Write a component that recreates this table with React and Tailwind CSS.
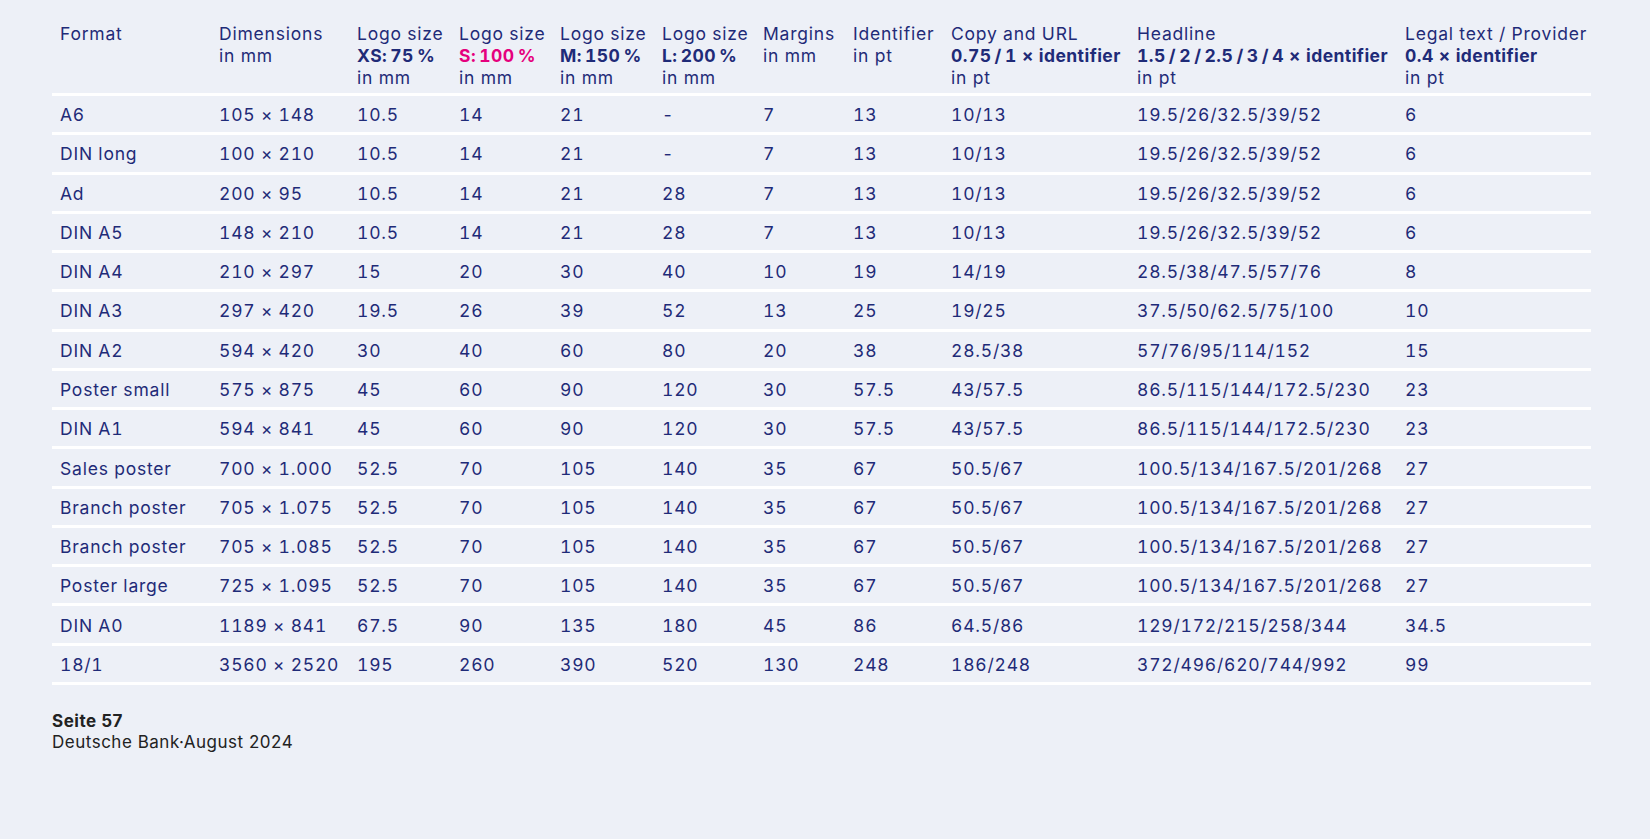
import React from "react";

const cols = [
  "w-[159px]",
  "w-[138px]",
  "w-[102px]",
  "w-[101px]",
  "w-[102px]",
  "w-[101px]",
  "w-[90px]",
  "w-[98px]",
  "w-[186px]",
  "w-[268px]",
  "w-[194px]",
];

const t = "\u2009";

const header = [
  { top: "Format" },
  { top: "Dimensions", bottom: "in mm" },
  { top: "Logo size", mid: `XS:${t}75${t}%`, bottom: "in mm" },
  { top: "Logo size", mid: `S:${t}100${t}%`, bottom: "in mm", pink: true },
  { top: "Logo size", mid: `M:${t}150${t}%`, bottom: "in mm" },
  { top: "Logo size", mid: `L:${t}200${t}%`, bottom: "in mm" },
  { top: "Margins", bottom: "in mm" },
  { top: "Identifier", bottom: "in pt" },
  { top: "Copy and URL", mid: `0.75${t}/${t}1 × identifier`, bottom: "in pt" },
  { top: "Headline", mid: `1.5${t}/${t}2${t}/${t}2.5${t}/${t}3${t}/${t}4 × identifier`, bottom: "in pt" },
  { top: "Legal text / Provider", mid: "0.4 × identifier", bottom: "in pt" },
];

const rows = [
  ["A6", "105 × 148", "10.5", "14", "21", "-", "7", "13", "10/13", "19.5/26/32.5/39/52", "6"],
  ["DIN long", "100 × 210", "10.5", "14", "21", "-", "7", "13", "10/13", "19.5/26/32.5/39/52", "6"],
  ["Ad", "200 × 95", "10.5", "14", "21", "28", "7", "13", "10/13", "19.5/26/32.5/39/52", "6"],
  ["DIN A5", "148 × 210", "10.5", "14", "21", "28", "7", "13", "10/13", "19.5/26/32.5/39/52", "6"],
  ["DIN A4", "210 × 297", "15", "20", "30", "40", "10", "19", "14/19", "28.5/38/47.5/57/76", "8"],
  ["DIN A3", "297 × 420", "19.5", "26", "39", "52", "13", "25", "19/25", "37.5/50/62.5/75/100", "10"],
  ["DIN A2", "594 × 420", "30", "40", "60", "80", "20", "38", "28.5/38", "57/76/95/114/152", "15"],
  ["Poster small", "575 × 875", "45", "60", "90", "120", "30", "57.5", "43/57.5", "86.5/115/144/172.5/230", "23"],
  ["DIN A1", "594 × 841", "45", "60", "90", "120", "30", "57.5", "43/57.5", "86.5/115/144/172.5/230", "23"],
  ["Sales poster", "700 × 1.000", "52.5", "70", "105", "140", "35", "67", "50.5/67", "100.5/134/167.5/201/268", "27"],
  ["Branch poster", "705 × 1.075", "52.5", "70", "105", "140", "35", "67", "50.5/67", "100.5/134/167.5/201/268", "27"],
  ["Branch poster", "705 × 1.085", "52.5", "70", "105", "140", "35", "67", "50.5/67", "100.5/134/167.5/201/268", "27"],
  ["Poster large", "725 × 1.095", "52.5", "70", "105", "140", "35", "67", "50.5/67", "100.5/134/167.5/201/268", "27"],
  ["DIN A0", "1189 × 841", "67.5", "90", "135", "180", "45", "86", "64.5/86", "129/172/215/258/344", "34.5"],
  ["18/1", "3560 × 2520", "195", "260", "390", "520", "130", "248", "186/248", "372/496/620/744/992", "99"],
];

export default function App() {
  return (
    <div
      className="min-h-screen w-full bg-[#edf0f7] pl-[52px] pt-[23px] text-[#1f2b78]"
      style={{ fontFamily: "Inter, 'Noto Sans', sans-serif" }}
    >
      <div className="w-[1539px] text-[17.5px] leading-[22px] tracking-[0.045em] tabular-nums">
        {/* Kopfzeile */}
        <div className="flex border-b-[3px] border-white pb-[4px]">
          {header.map((h, i) => (
            <div key={i} className={`${cols[i]} shrink-0 px-2 whitespace-nowrap`}>
              <div>{h.top}</div>
              {h.mid && (
                <div className={`font-bold tracking-[0.025em] ${h.pink ? "text-[#e5007d]" : ""}`}>
                  {h.mid}
                </div>
              )}
              {h.bottom && <div>{h.bottom}</div>}
            </div>
          ))}
        </div>

        {/* Daten */}
        {rows.map((row, r) => (
          <div key={r} className="flex h-[39.27px] items-center border-b-[3px] border-white pt-[2px]">
            {row.map((cell, i) => (
              <div key={i} className={`${cols[i]} shrink-0 px-2 whitespace-nowrap`}>
                {cell}
              </div>
            ))}
          </div>
        ))}
      </div>

      {/* Fußzeile */}
      <div className="mt-[26px] text-[17px] leading-[21px] tracking-[0.03em] text-[#222222]">
        <div className="font-bold">Seite 57</div>
        <div>Deutsche Bank·August 2024</div>
      </div>
    </div>
  );
}
